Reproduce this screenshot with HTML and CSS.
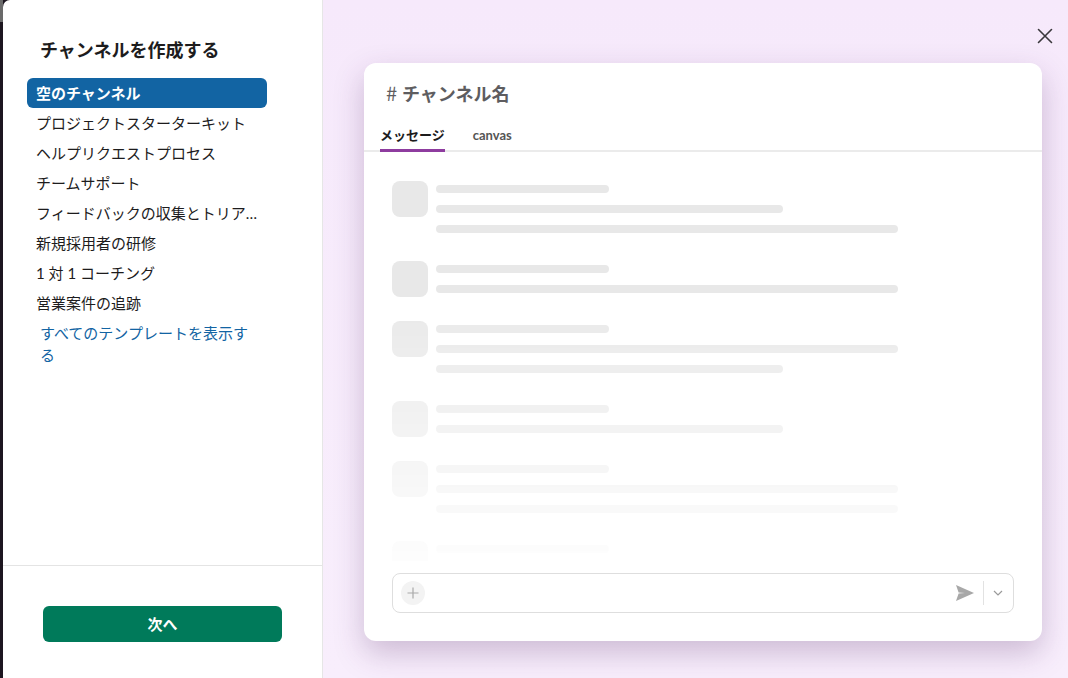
FILE: index.html
```
<!DOCTYPE html>
<html lang="ja">
<head>
    <meta charset="UTF-8">
    <title>チャンネルを作成する</title>
    <link rel="stylesheet" href="styles.css">
</head>
<body>
    <div class="edge"></div>
    <div class="modal">
        <div class="side">
            <div class="side-top">
                <h2 class="side-title">チャンネルを作成する</h2>
                <ul class="templates">
                    <li class="selected">空のチャンネル</li>
                    <li>プロジェクトスターターキット</li>
                    <li>ヘルプリクエストプロセス</li>
                    <li>チームサポート</li>
                    <li>フィードバックの収集とトリア…</li>
                    <li>新規採用者の研修</li>
                    <li>1 対 1 コーチング</li>
                    <li>営業案件の追跡</li>
                </ul>
                <a class="all-link" href="#">すべてのテンプレートを表示する</a>
            </div>
            <div class="side-footer">
                <button class="next">次へ</button>
            </div>
        </div>

        <div class="preview">
            <button class="close" aria-label="閉じる">
                <svg width="16" height="16" viewBox="0 0 16 16"><path d="M1.5 1.5 L14.5 14.5 M14.5 1.5 L1.5 14.5" stroke="#3a383c" stroke-width="1.6" stroke-linecap="round"/></svg>
            </button>
            <div class="card">
                <div class="card-title"><span class="hash">#</span>チャンネル名</div>
                <div class="tabs">
                    <span class="tab active">メッセージ</span>
                    <span class="tab">canvas</span>
                </div>
                <div class="skeleton">
                    <div class="msg">
                        <div class="avatar"></div>
                        <div class="lines"><span class="bar short"></span><span class="bar mid"></span><span class="bar long"></span></div>
                    </div>
                    <div class="msg">
                        <div class="avatar"></div>
                        <div class="lines"><span class="bar short"></span><span class="bar long"></span></div>
                    </div>
                    <div class="msg">
                        <div class="avatar"></div>
                        <div class="lines"><span class="bar short"></span><span class="bar long"></span><span class="bar mid"></span></div>
                    </div>
                    <div class="msg">
                        <div class="avatar"></div>
                        <div class="lines"><span class="bar short"></span><span class="bar mid"></span></div>
                    </div>
                    <div class="msg">
                        <div class="avatar"></div>
                        <div class="lines"><span class="bar short"></span><span class="bar long"></span><span class="bar long"></span></div>
                    </div>
                    <div class="msg">
                        <div class="avatar"></div>
                        <div class="lines"><span class="bar short"></span><span class="bar mid"></span></div>
                    </div>
                </div>
                <div class="composer">
                    <span class="plus">
                        <svg width="12" height="12" viewBox="0 0 12 12"><path d="M6 0.5 V11.5 M0.5 6 H11.5" stroke="#a9a9a9" stroke-width="1.2"/></svg>
                    </span>
                    <span class="spacer"></span>
                    <svg class="send" width="20" height="18" viewBox="0 0 20 18"><path d="M1 1 L19 9 L1 17 L3.6 9.6 L10 9 L3.6 8.4 Z" fill="#a8a8a8"/></svg>
                    <span class="divider"></span>
                    <span class="chevron">
                        <svg width="10" height="6" viewBox="0 0 10 6"><path d="M1 1 L5 5 L9 1" stroke="#9a9a9a" stroke-width="1.2" fill="none"/></svg>
                    </span>
                </div>
            </div>
        </div>
    </div>
</body>
</html>
```

FILE: styles.css
```
* {
    box-sizing: border-box;
}

body {
    margin: 0;
    height: 678px;
    display: flex;
    overflow: hidden;
    font-family: Lato, "Noto Sans CJK JP", sans-serif;
    color: #1d1c1d;
    background-color: #1d1620;
}

.edge {
    width: 3px;
    background: linear-gradient(#6a6a6a 0 22px, #1d1620 22px);
}

.modal {
    flex: 1;
    display: flex;
    border-top-left-radius: 7px;
    overflow: hidden;
    background-color: white;
}

/* colonne de gauche */
.side {
    width: 320px;
    display: flex;
    flex-direction: column;
    border-right: 1px solid #e6e6e6;
}

.side-top {
    flex: 1;
    padding: 37px 55px 0 24px;
}

.side-title {
    margin: 0 0 15px 13px;
    font-size: 18px;
    line-height: 26px;
    font-weight: 700;
}

.templates {
    list-style: none;
    margin: 0;
    padding: 0;
}

.templates li {
    height: 30px;
    line-height: 30px;
    padding: 0 9px;
    font-size: 15px;
    border-radius: 6px;
    white-space: nowrap;
}

.templates li.selected {
    background-color: #1264a3;
    color: white;
    font-weight: 700;
}

.all-link {
    display: block;
    margin-top: 4px;
    padding: 0 13px;
    font-size: 15px;
    line-height: 22px;
    color: #1264a3;
    text-decoration: none;
}

.side-footer {
    border-top: 1px solid #e4e4e4;
    padding: 40px 40px 36px;
}

.next {
    width: 100%;
    height: 36px;
    padding-bottom: 3px;
    border: none;
    border-radius: 6px;
    background-color: #007a5a;
    color: white;
    font-family: inherit;
    font-size: 15px;
    font-weight: 700;
    cursor: pointer;
}

/* apercu a droite */
.preview {
    flex: 1;
    position: relative;
    display: flex;
    padding: 63px 26px 37px 41px;
    background: linear-gradient(#f6e9fb, #f8eefc);
}

.close {
    position: absolute;
    top: 28px;
    right: 15px;
    width: 16px;
    height: 16px;
    padding: 0;
    border: none;
    background: none;
}

.card {
    flex: 1;
    display: flex;
    flex-direction: column;
    background-color: white;
    border-radius: 12px;
    box-shadow: 0 12px 30px rgba(80, 40, 100, 0.26);
}

.card-title {
    height: 45px;
    padding: 17px 22px 0;
    font-size: 18px;
    line-height: 28px;
    font-weight: 700;
    color: #5e5d60;
}

.hash {
    display: inline-block;
    width: 16px;
    line-height: 1;
    font-size: 20px;
    font-weight: 400;
    font-family: "Noto Sans CJK JP", sans-serif;
}

.tabs {
    display: flex;
    gap: 28px;
    margin-top: 8px;
    padding: 0 16px;
    border-bottom: 2px solid #ebebeb;
}

.tab {
    padding: 10px 0 5px;
    margin-bottom: -2px;
    font-size: 13px;
    line-height: 18px;
    font-weight: 700;
    color: #555;
    border-bottom: 3px solid transparent;
}

.tab.active {
    color: #1d1c1d;
    border-bottom-color: #8e3c9f;
}

.skeleton {
    flex: 1;
    padding: 29px 28px 0;
    overflow: hidden;
    -webkit-mask-image: linear-gradient(#000 140px, transparent 430px);
    mask-image: linear-gradient(#000 140px, transparent 430px);
}

.msg {
    display: flex;
    gap: 8px;
    margin-bottom: 24px;
}

.avatar {
    width: 36px;
    height: 36px;
    border-radius: 8px;
    background-color: #e8e8e8;
}

.lines {
    display: flex;
    flex-direction: column;
    gap: 12px;
    padding: 4px 0;
}

.bar {
    display: block;
    height: 8px;
    border-radius: 4px;
    background-color: #e8e8e8;
}

.bar.short { width: 173px; }
.bar.mid { width: 347px; }
.bar.long { width: 462px; }

.composer {
    display: flex;
    align-items: center;
    height: 40px;
    margin: 12px 28px 28px;
    padding: 0 1px 0 8px;
    border: 1px solid #dedede;
    border-radius: 8px;
}

.plus {
    width: 24px;
    height: 24px;
    border-radius: 50%;
    background-color: #f3f3f3;
    display: flex;
    align-items: center;
    justify-content: center;
}

.spacer {
    flex: 1;
}

.send {
    margin-right: 8px;
}

.divider {
    width: 1px;
    height: 24px;
    background-color: #e2e2e2;
}

.chevron {
    width: 28px;
    display: flex;
    justify-content: center;
}
```
